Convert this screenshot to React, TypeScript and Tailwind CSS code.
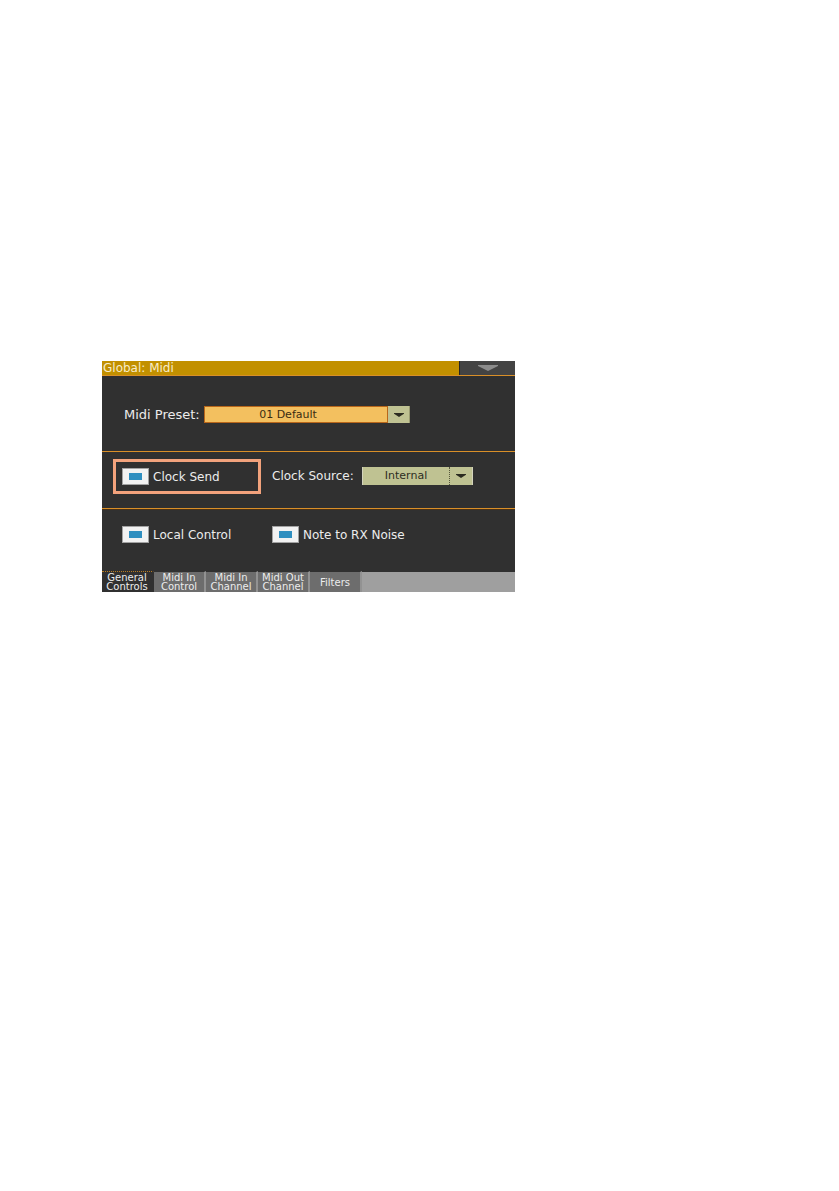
import { useState } from "react";
import clsx from "clsx";

const tabs = [
  ["General", "Controls"],
  ["Midi In", "Control"],
  ["Midi In", "Channel"],
  ["Midi Out", "Channel"],
  ["Filters"],
];

function Arrow({ className }: { className: string }) {
  return (
    <svg viewBox="0 0 20 6" preserveAspectRatio="none" className={className} aria-hidden="true">
      <path d="M0 0h20v1L13 4.5 10 6 7 4.5 0 1z" fill="currentColor" />
    </svg>
  );
}

function Rule() {
  return <hr className="h-px border-0 bg-[#d98f28]" />;
}

function CheckField({ id, label }: { id: string; label: string }) {
  return (
    <div className="flex items-center gap-1">
      <input
        id={id}
        type="checkbox"
        defaultChecked
        className="grid h-[17px] w-[27px] shrink-0 appearance-none place-items-center border border-[#a2a2a2] bg-[#f2f2f2] before:h-[7px] before:w-[13px] before:content-[''] checked:before:bg-[#2f8fc0]"
      />
      <label htmlFor={id} className="whitespace-nowrap">
        {label}
      </label>
    </div>
  );
}

export default function App() {
  const [active, setActive] = useState(0);

  return (
    <main className="min-h-screen bg-white px-[102px] pt-[361px] font-['DejaVu_Sans',sans-serif] text-[12px] leading-[14px] text-[#ececec]">
      <div className="w-full max-w-[413px] bg-[#303030]">
        <header className="flex h-[14px] bg-[#c29000]">
          <h1 className="flex-1 pl-px text-[#f8ecc8]">Global: Midi</h1>
          <button type="button" aria-label="Page menu" className="flex w-14 justify-center border-l border-[#252525] bg-[#434343] pt-1 text-[#8c8c8c]">
            <Arrow className="h-[6px] w-5" />
          </button>
        </header>
        <Rule />

        <section className="flex items-center pt-[30px] pb-7 pl-[22px]">
          <label htmlFor="preset" className="w-20 whitespace-nowrap text-[13px]">
            Midi Preset:
          </label>
          <div className="flex h-[17px] w-[206px] bg-[#bfc292]">
            <select
              id="preset"
              className="min-w-0 flex-1 appearance-none border border-[#b8661a] bg-[#f3c05f] pr-4 text-center text-[11px] leading-[14px] text-[#3a2c12] [text-align-last:center]"
            >
              <option>01 Default</option>
            </select>
            <span className="flex w-[22px] items-center justify-center border-r border-[#98996f] text-[#2b2b20]">
              <Arrow className="h-1 w-[10px]" />
            </span>
          </div>
        </section>
        <Rule />

        <section className="flex items-start gap-[11px] pt-[7px] pb-[14px] pl-[11px]">
          <div className="w-[148px] border-3 border-[#f2a27c] p-[6px]">
            <CheckField id="clock-send" label="Clock Send" />
          </div>
          <div className="flex items-center pt-2">
            <label htmlFor="clock-source" className="w-[90px] whitespace-nowrap">
              Clock Source:
            </label>
            <div className="flex h-[18px] w-[111px] border-x border-[#d3d3bd] bg-[#bfc292]">
              <select
                id="clock-source"
                className="min-w-0 flex-1 appearance-none border-r border-dotted border-[#55563c] text-center text-[11px] leading-[14px] text-[#2e2e22] [text-align-last:center]"
              >
                <option>Internal</option>
              </select>
              <span className="flex w-[22px] items-center justify-center text-[#2b2b20]">
                <Arrow className="h-1 w-[10px]" />
              </span>
            </div>
          </div>
        </section>
        <Rule />

        <section className="grid grid-cols-[150px_1fr] border-t border-[#493116] pt-4 pb-7 pl-5">
          <CheckField id="local-control" label="Local Control" />
          <CheckField id="rx-noise" label="Note to RX Noise" />
        </section>

        <nav role="tablist" className="flex h-[21px] bg-[#9f9f9f] text-[10px] leading-[9px]">
          {tabs.map((lines, i) => (
            <button
              key={i}
              type="button"
              role="tab"
              aria-selected={active === i}
              onClick={() => setActive(i)}
              className={clsx(
                "flex w-[52px] flex-col items-center justify-center whitespace-nowrap border-t border-r-2",
                active === i
                  ? "border-t-[#b87c20] border-r-[#303030] bg-[#303030] [border-top-style:dotted]"
                  : "border-t-[#303030] border-r-[#929292] bg-[#6d6d6d]",
              )}
            >
              {lines.map((line) => (
                <span key={line}>{line}</span>
              ))}
            </button>
          ))}
          <span className="flex-1 border-t border-[#303030]" />
        </nav>
      </div>
    </main>
  );
}
